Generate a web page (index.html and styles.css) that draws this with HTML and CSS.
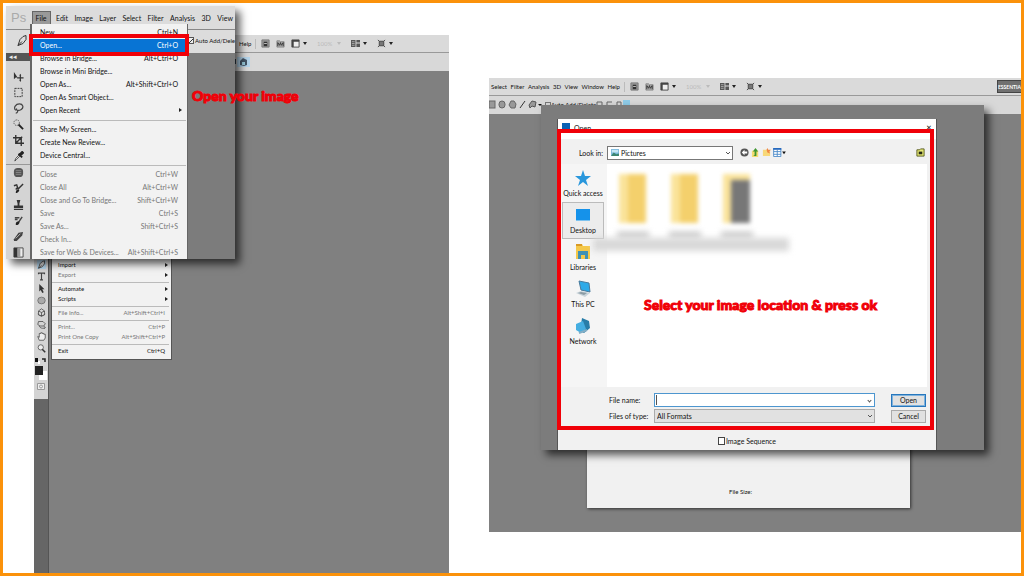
FILE: index.html
```html
<!DOCTYPE html>
<html lang="en">
<head>
  <meta charset="UTF-8">
  <meta name="viewport" content="width=device-width, initial-scale=1.0">
  <title>Open your image</title>
  <link rel="stylesheet" href="styles.css">
</head>
<body>
  <!-- shared icons -->
  <svg class="sprite" aria-hidden="true">
    <symbol id="pen" viewBox="0 0 12 12"><path d="M10 1 7 2 4 5 2 11l5-2 3-4zM2 11l4-4" fill="#ddd" stroke="#333"/></symbol>
    <symbol id="move" viewBox="0 0 12 12"><path d="M1 1v8l2-2 2 0z" fill="#333"/><path d="M8 4v7M4.500 7.500h7" stroke="#333" stroke-width="1.300"/><path d="M8 3l1 2H7zM8 12l1-2H7z" fill="#333"/></symbol>
    <symbol id="marquee" viewBox="0 0 12 12"><path d="M2 1.500h8v9H2z" fill="none" stroke="#333" stroke-dasharray="2 1"/></symbol>
    <symbol id="lasso" viewBox="0 0 12 12"><path d="M3 8C0 5 3 1 7 1s5 4 2 6-6 1-5-1M4 8c2 0 1 3-1 3" fill="none" stroke="#444" stroke-width="1.300"/></symbol>
    <symbol id="wand" viewBox="0 0 12 12"><path d="M6 6l5 5" stroke="#222" stroke-width="2"/><circle cx="4" cy="4" r="3" fill="none" stroke="#555" stroke-dasharray="1.500 1"/></symbol>
    <symbol id="crop" viewBox="0 0 12 12"><path d="M3 0v9h9M0 3h9v9M3 9l7-7" fill="none" stroke="#333" stroke-width="1.500"/></symbol>
    <symbol id="dropper" viewBox="0 0 12 12"><path d="M2 11l1-3 4-4 1 1-4 4z" fill="#eee" stroke="#444"/><path d="M6 3l4 4M7 4l3-3 1 1-3 3" stroke="#222" stroke-width="2"/></symbol>
    <symbol id="heal" viewBox="0 0 12 12"><rect x="1" y="1" width="10" height="10" rx="4" fill="#555"/><path d="M3 4h6M3 6h6M3 8h6" stroke="#888"/></symbol>
    <symbol id="brush" viewBox="0 0 12 12"><path d="M11 1 5 7M1 3l3-1 1 3-2 2" fill="none" stroke="#333" stroke-width="1.600"/><path d="M3 11c0-3 1-4 3-4s0 4-3 4z" fill="#222"/></symbol>
    <symbol id="stamp" viewBox="0 0 12 12"><path d="M4 1h4L7 5v2h4v3H1V7h4V5zM1 11h10v1H1z" fill="#333"/></symbol>
    <symbol id="history" viewBox="0 0 12 12"><path d="M10 2 6 8M2 3h5M2 5h3" stroke="#444" stroke-width="1.600"/><path d="M3 11c0-4 1-4 4-4 0 3-1 4-4 4z" fill="#222"/></symbol>
    <symbol id="eraser" viewBox="0 0 12 12"><path d="M1 9l5-7 5-1-1 4-6 6H1z" fill="#444"/><path d="M3 8l5-5" stroke="#bbb"/></symbol>
    <symbol id="gradient" viewBox="0 0 12 12"><path d="M1 1h10v10H1z" fill="#eee" stroke="#444"/><path d="M1 1h4v10H1z" fill="#333"/><path d="M5 1h3v10H5z" fill="#999"/></symbol>
    <symbol id="type" viewBox="0 0 12 12"><path d="M2 3V1.500h8V3M6 1.500v9M4 10.500h4" fill="none" stroke="#444" stroke-width="1.500"/></symbol>
    <symbol id="arrow" viewBox="0 0 12 12"><path d="M3 0v10l2-2 2 4 2-1-2-4h3z" fill="#333"/></symbol>
    <symbol id="ellipse" viewBox="0 0 12 12"><ellipse cx="6" cy="6" rx="5" ry="4.500" fill="#aaa" stroke="#666"/></symbol>
    <symbol id="cube" viewBox="0 0 12 12"><path d="M2 4l4-3 4 3v5l-4 2-4-2zM2 4l4 2 4-2M6 6v5M1 8c3 3 7 3 10 0" fill="none" stroke="#444"/></symbol>
    <symbol id="orbit" viewBox="0 0 12 12"><path d="M2 2h6l3 3-2 3H4L1 6zM3 8c1 3 5 4 8 2M9 8l2 2-2 2" fill="none" stroke="#444"/></symbol>
    <symbol id="hand" viewBox="0 0 12 12"><path d="M3 11 1 6l2 1V2h2V1h2v1h2v1h2v5l-2 3z" fill="#eee" stroke="#444"/></symbol>
    <symbol id="zoom" viewBox="0 0 12 12"><circle cx="5" cy="4.500" r="3.500" fill="#eee" stroke="#444"/><path d="M7 7l4 4" stroke="#333" stroke-width="2"/></symbol>
    <symbol id="bridge" viewBox="0 0 10 10"><path d="M1 1h8v8H1z" fill="#999" stroke="#777"/><path d="M3 3h4v5H3z" fill="#333"/><path d="M3.500 5h3" stroke="#ccc"/></symbol>
    <symbol id="mini" viewBox="0 0 10 10"><path d="M1 2h3l1 1h4v6H1z" fill="#aaa" stroke="#888"/><path d="M2 8V4l2 3 1-3 1 3 2-3v4" fill="none" stroke="#333"/></symbol>
    <symbol id="extras" viewBox="0 0 10 10"><path d="M1 1h8v8H1z" fill="#eee" stroke="#444"/><path d="M1 2h8M2 1v8" stroke="#444" stroke-width="2"/></symbol>
    <symbol id="arrange" viewBox="0 0 10 10"><path d="M0 1h5v8H0zM6 1h4v3H6zM6 5h4v4H6z" fill="#555"/><path d="M1 3h3M1 5h3M1 7h3" stroke="#aaa"/></symbol>
    <symbol id="screen" viewBox="0 0 10 10"><path d="M1 1l2 2M9 1 7 3M1 9l2-2M9 9 7 7" stroke="#444"/><path d="M2.500 2.500h5v5h-5z" fill="#777" stroke="#444"/></symbol>
  </svg>

  <main class="frame">
    <section class="shot shot-left">
      <div class="bar">
        <nav class="bar-menu"><a href="#">Help</a></nav>
        <div class="bar-icons">
          <svg><use href="#bridge"/></svg>
          <svg><use href="#mini"/></svg>
          <svg><use href="#extras"/></svg><i class="caret"></i>
          <span class="faded">100%</span><i class="caret light"></i>
          <svg><use href="#arrange"/></svg><i class="caret"></i>
          <svg><use href="#screen"/></svg><i class="caret"></i>
        </div>
      </div>
      <div class="bar bar-options">
        <svg class="cubes" viewBox="0 0 18 10"><path d="M0 2h4v5H0z" fill="#345"/><path d="M5 0h13v10H5z" fill="#b4d4ea"/><path d="M8 4l3-3 4 2v5l-3 1-4-1z" fill="#456"/><path d="M10 5h3v3h-3z" fill="#9cd"/></svg>
      </div>
      <div class="work">
        <div class="rail">
          <div class="tools tools-small">
            <svg class="active"><use href="#pen"/></svg>
            <svg><use href="#type"/></svg>
            <svg><use href="#arrow"/></svg>
            <svg><use href="#ellipse"/></svg>
            <svg><use href="#cube"/></svg>
            <svg><use href="#orbit"/></svg>
            <svg><use href="#hand"/></svg>
            <svg><use href="#zoom"/></svg>
            <svg class="swatch" viewBox="0 0 12 40"><path d="M0 2h3v4H0z" fill="#111"/><path d="M3 5h2v3H3z" fill="#fff"/><path d="M7 3h3v3" fill="none" stroke="#222" stroke-width="1.500"/><path d="M4 15h8v9H4z" fill="#fff"/><path d="M0 10h8v9H0z" fill="#222"/><path d="M2.500 27.500h7v6h-7z" fill="#eee" stroke="#999"/><circle cx="6" cy="30.500" r="1.500" fill="none" stroke="#999"/></svg>
          </div>
        </div>
        <ul class="menu menu-small">
          <li><span>Import</span><i class="more"></i></li>
          <li class="off"><span>Export</span><i class="more"></i></li>
          <li class="sep"></li>
          <li><span>Automate</span><i class="more"></i></li>
          <li><span>Scripts</span><i class="more"></i></li>
          <li class="sep"></li>
          <li class="off"><span>File Info...</span><span>Alt+Shift+Ctrl+I</span></li>
          <li class="sep"></li>
          <li class="off"><span>Print...</span><span>Ctrl+P</span></li>
          <li class="off"><span>Print One Copy</span><span>Alt+Shift+Ctrl+P</span></li>
          <li class="sep"></li>
          <li><span>Exit</span><span>Ctrl+Q</span></li>
        </ul>
      </div>

      <!-- magnified File menu -->
      <div class="inset inset-menu">
        <nav class="top">
          <b class="ps">Ps</b>
          <a href="#" class="current">File</a>
          <a href="#">Edit</a>
          <a href="#">Image</a>
          <a href="#">Layer</a>
          <a href="#">Select</a>
          <a href="#">Filter</a>
          <a href="#">Analysis</a>
          <a href="#">3D</a>
          <a href="#">View</a>
        </nav>
        <div class="options">
          <svg class="pen"><use href="#pen"/></svg>
          <label><input type="checkbox" checked>Auto Add/Dele</label>
        </div>
        <div class="tools tools-big">
          <div class="collapse"></div>
          <svg><use href="#move"/></svg>
          <svg><use href="#marquee"/></svg>
          <svg><use href="#lasso"/></svg>
          <svg><use href="#wand"/></svg>
          <svg><use href="#crop"/></svg>
          <svg><use href="#dropper"/></svg>
          <hr>
          <svg><use href="#heal"/></svg>
          <svg><use href="#brush"/></svg>
          <svg><use href="#stamp"/></svg>
          <svg><use href="#history"/></svg>
          <svg><use href="#eraser"/></svg>
          <svg><use href="#gradient"/></svg>
        </div>
        <ul class="menu menu-big">
          <li><span>New...</span><span>Ctrl+N</span></li>
          <li class="selected"><span>Open...</span><span>Ctrl+O</span></li>
          <li><span>Browse in Bridge...</span><span>Alt+Ctrl+O</span></li>
          <li><span>Browse in Mini Bridge...</span></li>
          <li><span>Open As...</span><span>Alt+Shift+Ctrl+O</span></li>
          <li><span>Open As Smart Object...</span></li>
          <li><span>Open Recent</span><i class="more"></i></li>
          <li class="sep"></li>
          <li><span>Share My Screen...</span></li>
          <li><span>Create New Review...</span></li>
          <li><span>Device Central...</span></li>
          <li class="sep"></li>
          <li class="off"><span>Close</span><span>Ctrl+W</span></li>
          <li class="off"><span>Close All</span><span>Alt+Ctrl+W</span></li>
          <li class="off"><span>Close and Go To Bridge...</span><span>Shift+Ctrl+W</span></li>
          <li class="off"><span>Save</span><span>Ctrl+S</span></li>
          <li class="off"><span>Save As...</span><span>Shift+Ctrl+S</span></li>
          <li class="off"><span>Check In...</span></li>
          <li class="off"><span>Save for Web &amp; Devices...</span><span>Alt+Shift+Ctrl+S</span></li>
        </ul>
        <div class="mark mark-open"></div>
      </div>
      <p class="note note-open">Open your image</p>
    </section>

    <section class="shot shot-right">
      <div class="bar">
        <nav class="bar-menu">
          <a href="#">Select</a>
          <a href="#">Filter</a>
          <a href="#">Analysis</a>
          <a href="#">3D</a>
          <a href="#">View</a>
          <a href="#">Window</a>
          <a href="#">Help</a>
        </nav>
        <div class="bar-icons">
          <svg><use href="#bridge"/></svg>
          <svg><use href="#mini"/></svg>
          <svg><use href="#extras"/></svg><i class="caret"></i>
          <span class="faded">100%</span><i class="caret light"></i>
          <svg><use href="#arrange"/></svg><i class="caret"></i>
          <svg><use href="#screen"/></svg><i class="caret"></i>
        </div>
        <button class="essentials">ESSENTIA</button>
      </div>
      <div class="bar bar-options">
        <svg class="shapes" viewBox="0 0 56 12"><g fill="#999" stroke="#666"><rect x="0" y="2" width="6" height="7"/><rect x="10" y="2" width="6" height="7" rx="3"/><path d="M22 2h3l2 3-1 4h-4l-2-3z"/></g><path d="M31 9l5-7" stroke="#333"/><path d="M41 9l-1-3 3-4 4 1-1 5-3-1z" fill="#999" stroke="#555"/><path d="M49 5h4l-2 2z" fill="#111"/></svg>
        <label><input type="checkbox">Auto Add/Delete</label>
        <svg class="combine" viewBox="0 0 34 12"><path d="M1 3h5v6H1zM11 9V3h5M21 3h4v5h-4z" fill="none" stroke="#666"/><path d="M27 1h7v9h-7z" fill="#8ecbe8"/></svg>
      </div>

      <div class="size-panel">File Size:</div>

      <div class="inset inset-dialog">
        <div class="dialog">
          <div class="title"><span class="app"></span>Open<button class="close" aria-label="Close">✕</button></div>
          <div class="look">
            <label for="folder">Look in:</label>
            <div class="picker">
              <svg viewBox="0 0 9 8"><path d="M0 0h9v8H0z" fill="#7ab8dc"/><path d="M1 1h7v3H1z" fill="#c6e6f4"/><path d="M0 8l3-4 3 2 3-1v3z" fill="#3c8570"/></svg>
              <select id="folder"><option>Pictures</option></select>
            </div>
            <div class="look-icons">
              <svg viewBox="0 0 10 10"><circle cx="5" cy="5" r="4.500" fill="#555"/><path d="M5 2 2 5l3 3V6h3V4H5z" fill="#fff"/></svg>
              <svg viewBox="0 0 10 10"><path d="M1 3h7v7H1z" fill="#f5dc72"/><path d="M3 9h3V4h2L5 0 2 4h2v4H3z" fill="#3f9631"/></svg>
              <svg viewBox="0 0 10 10"><path d="M1 2h4l1 1h3v6H1z" fill="#f8d878"/><path d="M6 0l1 2 3 0-2 2 1 2-3-1-1-3z" fill="#ef8843"/></svg>
              <svg class="wide" viewBox="0 0 14 10"><path d="M.5.500h8v9h-8zM.5 4h8M4.500 2v7M.5 7h8" fill="#fff" stroke="#4c8ac8"/><path d="M0 0h9v2H0z" fill="#276abe"/><path d="M10 4h4l-2 3z" fill="#111"/></svg>
            </div>
            <svg class="goto" viewBox="0 0 10 10"><path d="M1 2h3l1-1h4v8H1z" fill="#e5e774" stroke="#55581c"/><path d="M3 4h4v3H3z" fill="#252815"/></svg>
          </div>
          <div class="browser">
            <div class="places">
              <button><svg viewBox="0 0 18 18"><path d="M9 1l2 6 6 0-5 4 2 6-5-4-5 4 2-6-5-4h6z" fill="#2997dc"/></svg>Quick access</button>
              <button class="on"><svg viewBox="0 0 18 18"><path d="M2 3h14v11H2z" fill="#1592ea"/><path d="M2 14h14v1H2z" fill="#7cc2ef"/></svg>Desktop</button>
              <button><svg viewBox="0 0 18 18"><path d="M2 1h6l1 2h7v13H2z" fill="#f4c84a"/><path d="M2 1h6v2H2z" fill="#d99a25"/><path d="M4 8h10v8h-3v-4H7v4H4z" fill="#3f91b5"/></svg>Libraries</button>
              <button><svg viewBox="0 0 18 18"><path d="M5 1l10 2 1 9-9-2z" fill="#2eaae8" stroke="#497a9b"/><path d="M2 13l5-2 9 2-5 4z" fill="#c9d4da"/><path d="M4 13l3-1 6 1-3 2z" fill="#8c9ca5"/></svg>This PC</button>
              <button><svg viewBox="0 0 18 18"><path d="M8 1l7 3 1 7-6 5-4-2z" fill="#287da8"/><path d="M2 7l7-3 3 8-5 4-5-3z" fill="#45aee1"/><path d="M5 16l8-3" stroke="#83aec5" stroke-width="2"/></svg>Network</button>
            </div>
            <div class="files">
              <div class="folders">
                <span class="folder"></span>
                <span class="folder"></span>
                <span class="folder dark"></span>
              </div>
              <div class="captions"><i></i><i></i><i></i></div>
              <div class="smudge"></div>
              <p class="note note-select">Select your image location &amp; press ok</p>
            </div>
          </div>
          <form class="fields">
            <label for="name">File name:</label>
            <div class="combo"><input type="text" id="name"><i class="chevron"></i></div>
            <button type="button" class="primary">Open</button>
            <label for="kind">Files of type:</label>
            <select id="kind"><option>All Formats</option></select>
            <button type="button">Cancel</button>
          </form>
          <label class="sequence"><input type="checkbox">Image Sequence</label>
          <div class="mark mark-dialog"></div>
        </div>
      </div>
    </section>
  </main>
</body>
</html>
```
FILE: styles.css
```css
* {
  box-sizing: border-box;
}
body {
  margin: 0;
  font-family: Lato, "Liberation Sans", sans-serif;
  font-size: 7px;
  line-height: 10px;
  color: #111;
  background: #fff;
}
a {
  color: inherit;
  text-decoration: none;
}
button, input, select {
  font: inherit;
  color: inherit;
  margin: 0;
  padding: 0;
}
svg {
  display: block;
  flex: none;
}
ul, p {
  margin: 0;
  padding: 0;
  list-style: none;
}
label {
  white-space: nowrap;
}
.sprite {
  display: none;
}
.frame {
  min-height: 100vh;
  border: 3px solid #fb920a;
  padding-left: 31px;
  display: grid;
  grid-template-columns: 415fr 532fr;
  column-gap: 40px;
}
.shot {
  position: relative;
  background: #808080;
  display: flex;
  flex-direction: column;
  min-width: 0;
}
.shot-left {
  margin-top: 32px;
}
.shot-right {
  margin: 75px 0 41px;
}

/* application bars */
.bar {
  height: 18px;
  flex: none;
  display: flex;
  align-items: center;
  background: #dadada;
  border-bottom: 1px solid #999;
  font-size: 6px;
  overflow: hidden;
}
.bar-options {
  border-bottom: 0;
  background: #d8d8d8;
}
.bar-menu {
  width: 136px;
  flex: none;
  display: flex;
  justify-content: space-between;
  padding: 0 4px 0 2px;
  border-right: 1px solid #bbb;
}
.shot-left .bar-menu {
  width: 222px;
  padding-left: 205px;
}
.bar-icons {
  display: flex;
  align-items: center;
  padding-left: 5px;
}
.bar-icons svg {
  width: 9px;
  height: 9px;
  margin-right: 6px;
}
.caret {
  border: 2px solid transparent;
  border-top: 3px solid #222;
  border-bottom: 0;
  margin: 0 10px 0 -3px;
}
.caret.light {
  border-top-color: #bbb;
  margin: 0 10px 0 5px;
}
.faded {
  color: #bbb;
}
.essentials {
  margin-left: auto;
  height: 13px;
  flex: none;
  border: 1px solid #444;
  border-right: 0;
  background: #707070;
  color: #fff;
  font-size: 5px;
  font-weight: bold;
}
.cubes {
  width: 18px;
  height: 10px;
  margin-left: 198px;
}
.bar label {
  display: flex;
  align-items: center;
}
.bar input {
  appearance: none;
  width: 6px;
  height: 6px;
  border: 1px solid #777;
}
.shapes {
  width: 56px;
  height: 12px;
}
.combine {
  width: 34px;
  height: 12px;
}

/* tool rail and lower File menu */
.work {
  flex: 1;
  display: flex;
  align-items: flex-start;
}
.rail {
  align-self: stretch;
  width: 15px;
  background: #666;
  border-right: 1px solid #555;
}
.tools {
  background: #d4d4d4;
  display: flex;
  flex-direction: column;
  align-items: center;
}
.tools-small {
  padding: 189px 0 3px;
  gap: 3px;
}
.tools-small svg {
  width: 9px;
  height: 9px;
}
.tools-small .swatch {
  width: 12px;
  height: 40px;
}
.tools-small .active {
  background: #b4d4ea;
}
.menu {
  background: #f2f2f2;
}
.menu li {
  display: flex;
  justify-content: space-between;
  align-items: center;
  white-space: nowrap;
}
.menu .off {
  color: #777;
}
.menu .sep::before {
  content: "";
  flex: 1;
  border-top: 1px solid #bbb;
}
.more {
  border: 2px solid transparent;
  border-left: 3px solid #222;
  border-right: 0;
}
.menu-small {
  width: 121px;
  margin-left: 2px;
  padding: 189px 0 3px;
  font-size: 6px;
  border: 1px solid #555;
  border-top: 0;
}
.menu-small li {
  height: 10px;
  padding: 0 6px;
}
.menu-small .more {
  margin-right: -3px;
}
.menu-small .sep {
  height: 4px;
  padding: 0 2px 0 0;
}

/* magnified menu, sits over the left shot */
.inset {
  position: absolute;
  background: #7c7c7c;
  box-shadow: 5px 5px 8px rgba(0, 0, 0, .65);
}
.inset-menu {
  left: -28px;
  top: -29px;
  width: 229px;
  height: 253px;
}
.top {
  height: 24px;
  display: flex;
  align-items: center;
  justify-content: space-between;
  padding: 0 2px 0 5px;
  background: #dcdcdc;
  border-bottom: 1px solid #888;
}
.top a {
  padding: 2px 0;
}
.top .current {
  background: #999;
  outline: 1px solid #666;
  padding: 1px 3px;
}
.ps {
  font: 13px "Liberation Sans", sans-serif;
  color: #aaa;
}
.options {
  height: 23px;
  display: flex;
  align-items: center;
  justify-content: space-between;
  background: #dcdcdc;
  padding: 0 0 2px 10px;
}
.options label {
  display: flex;
  align-items: center;
  gap: 1px;
  font-size: 6px;
}
.options input {
  appearance: none;
  flex: none;
  width: 6px;
  height: 7px;
  border: 1px solid #555;
  background: linear-gradient(135deg, #eee 45%, #333 45%, #333 60%, #eee 60%);
}
.pen {
  width: 12px;
  height: 13px;
}
.tools-big {
  width: 24px;
  height: 206px;
  gap: 5px;
}
.tools-big svg {
  width: 11px;
  height: 11px;
}
.tools-big hr {
  width: 100%;
  margin: -3px 0;
  border: 0;
  border-top: 1px solid #999;
}
.collapse {
  align-self: stretch;
  height: 8px;
  margin-bottom: 5px;
  background: #555;
}
.collapse::before {
  content: "◂◂";
  color: #eee;
  display: block;
  padding-left: 3px;
  line-height: 7px;
}
.menu-big {
  position: absolute;
  top: 18px;
  left: 24px;
  width: 158px;
  padding: 2px 0 0;
  border-left: 2px solid #666;
  border-right: 1px solid #666;
}
.menu-big li {
  height: 13px;
  padding: 0 9px 1px 8px;
}
.menu-big .sep {
  height: 6px;
  padding: 0 1px;
}
.menu-big .more {
  margin-right: -4px;
}
.menu-big .selected {
  background: #0874d4;
  color: #fff;
}
.mark {
  position: absolute;
  border: 4px solid #f00008;
}
.mark-open {
  left: 23px;
  top: 28px;
  width: 160px;
  height: 22px;
}
.note {
  color: #f00008;
  font-weight: 900;
  font-size: 14px;
  line-height: 26px;
  white-space: nowrap;
  -webkit-text-stroke: 1px #f00008;
}
.note-open {
  position: absolute;
  left: 158px;
  top: 48px;
}

/* magnified Open dialog, sits over the right shot */
.inset-dialog {
  top: 27px;
  left: 52px;
  right: 37px;
  padding: 14px 47px 0 16px;
}
.dialog {
  position: relative;
  background: #f1f1f1;
  border-left: 1px solid #555;
  border-right: 1px solid #555;
}
.title {
  height: 20px;
  display: flex;
  align-items: flex-start;
  gap: 4px;
  padding: 4px 4px 0;
  background: #fff;
}
.app {
  width: 8px;
  height: 8px;
  background: #0b62b4;
}
.close {
  margin-left: auto;
  border: 0;
  background: none;
  line-height: 8px;
}
.look {
  height: 25px;
  display: flex;
  align-items: center;
  padding-top: 2px;
}
.look > label {
  width: 49px;
  padding-right: 4px;
  text-align: right;
}
.picker {
  width: 126px;
  height: 14px;
  display: flex;
  align-items: center;
  padding: 0 0 0 3px;
  background: #fff;
  border: 1px solid #777;
}
.picker svg {
  width: 8px;
  height: 7px;
}
select {
  appearance: none;
  flex: 1;
  min-width: 0;
  border: 0;
  padding-left: 2px;
  border-radius: 0;
  background: url("data:image/svg+xml,%3Csvg xmlns='http://www.w3.org/2000/svg' viewBox='0 0 6 6'%3E%3Cpath d='M1 2l2 2 2-2' fill='none' stroke='%23555'/%3E%3C/svg%3E") right 1px center / 6px 6px no-repeat;
}
.look-icons {
  display: flex;
  gap: 2px;
  margin-left: 7px;
}
.look-icons svg, .goto {
  width: 9px;
  height: 9px;
}
.look-icons .wide {
  width: 13px;
}
.goto {
  margin: 0 11px 0 auto;
}
.browser {
  display: flex;
}
.places {
  width: 49px;
  flex: none;
  padding: 1px 3px 0 4px;
  background: #f5f5f5;
}
.places button {
  width: 42px;
  height: 37px;
  display: flex;
  flex-direction: column;
  align-items: center;
  padding-top: 4px;
  gap: 1px;
  border: 0;
  background: none;
  white-space: nowrap;
}
.places .on {
  background: #ececec;
  border: 1px solid #bbb;
  padding-top: 3px;
}
.places svg {
  width: 18px;
  height: 18px;
}
.files {
  flex: 1;
  min-width: 0;
  height: 223px;
  margin-right: 9px;
  padding-top: 10px;
  background: #fff;
}
.folders {
  display: flex;
  gap: 25px;
  padding-left: 12px;
  filter: blur(2px);
}
.folder {
  width: 27px;
  height: 49px;
  background: linear-gradient(90deg, #fae39a 35%, #f4d06c 35%);
}
.folder.dark {
  background: linear-gradient(#fae39a, #fae39a) left / 8px 100% no-repeat, linear-gradient(#fae39a 12%, #777 12%);
}
.captions {
  display: flex;
  gap: 20px;
  padding: 9px 0 0 10px;
  filter: blur(3px);
}
.captions i {
  width: 32px;
  height: 6px;
  background: #c4c4c4;
}
.smudge {
  width: 196px;
  height: 13px;
  margin: 0 0 0 -14px;
  background: #d8d8d8;
  filter: blur(3px);
  position: relative;
}
.note-select {
  padding: 41px 0 0 37px;
}
.fields {
  display: grid;
  grid-template-columns: 45px 1fr 35px;
  grid-auto-rows: 14px;
  align-items: center;
  row-gap: 2px;
  padding: 6px 10px 0 51px;
}
.fields button {
  height: 13px;
  border: 1px solid #aaa;
  background: #e1e1e1;
}
.fields .primary {
  border: 1px solid #2777bd;
  outline: 1px solid #7fb2dc;
  outline-offset: -2px;
}
.fields select, .combo {
  height: 14px;
  margin-right: 16px;
  border: 1px solid #aaa;
  background-color: #e1e1e1;
}
.combo {
  display: flex;
  align-items: center;
  background: #fff;
  border-color: #4d96cf;
}
.combo input {
  flex: 1;
  min-width: 0;
  height: 10px;
  margin-left: 1px;
  border: 0;
  border-left: 1px solid #555;
  outline: 0;
}
.chevron {
  width: 3px;
  height: 3px;
  margin-right: 3px;
  border: solid #555;
  border-width: 0 1px 1px 0;
  transform: rotate(45deg);
}
.sequence {
  height: 27px;
  display: flex;
  align-items: center;
  justify-content: center;
  gap: 1px;
  padding-top: 9px;
}
.sequence input {
  appearance: none;
  width: 7px;
  height: 8px;
  border: 1px solid #444;
  background: #fff;
}
.mark-dialog {
  top: 10px;
  left: -1px;
  right: 2px;
  bottom: 20px;
}
.size-panel {
  position: absolute;
  left: 98px;
  right: 111px;
  top: 340px;
  height: 90px;
  padding-top: 69px;
  padding-right: 16px;
  text-align: center;
  background: #f1f1f1;
  box-shadow: 1px 1px 3px #333;
  font-size: 6px;
}
```
